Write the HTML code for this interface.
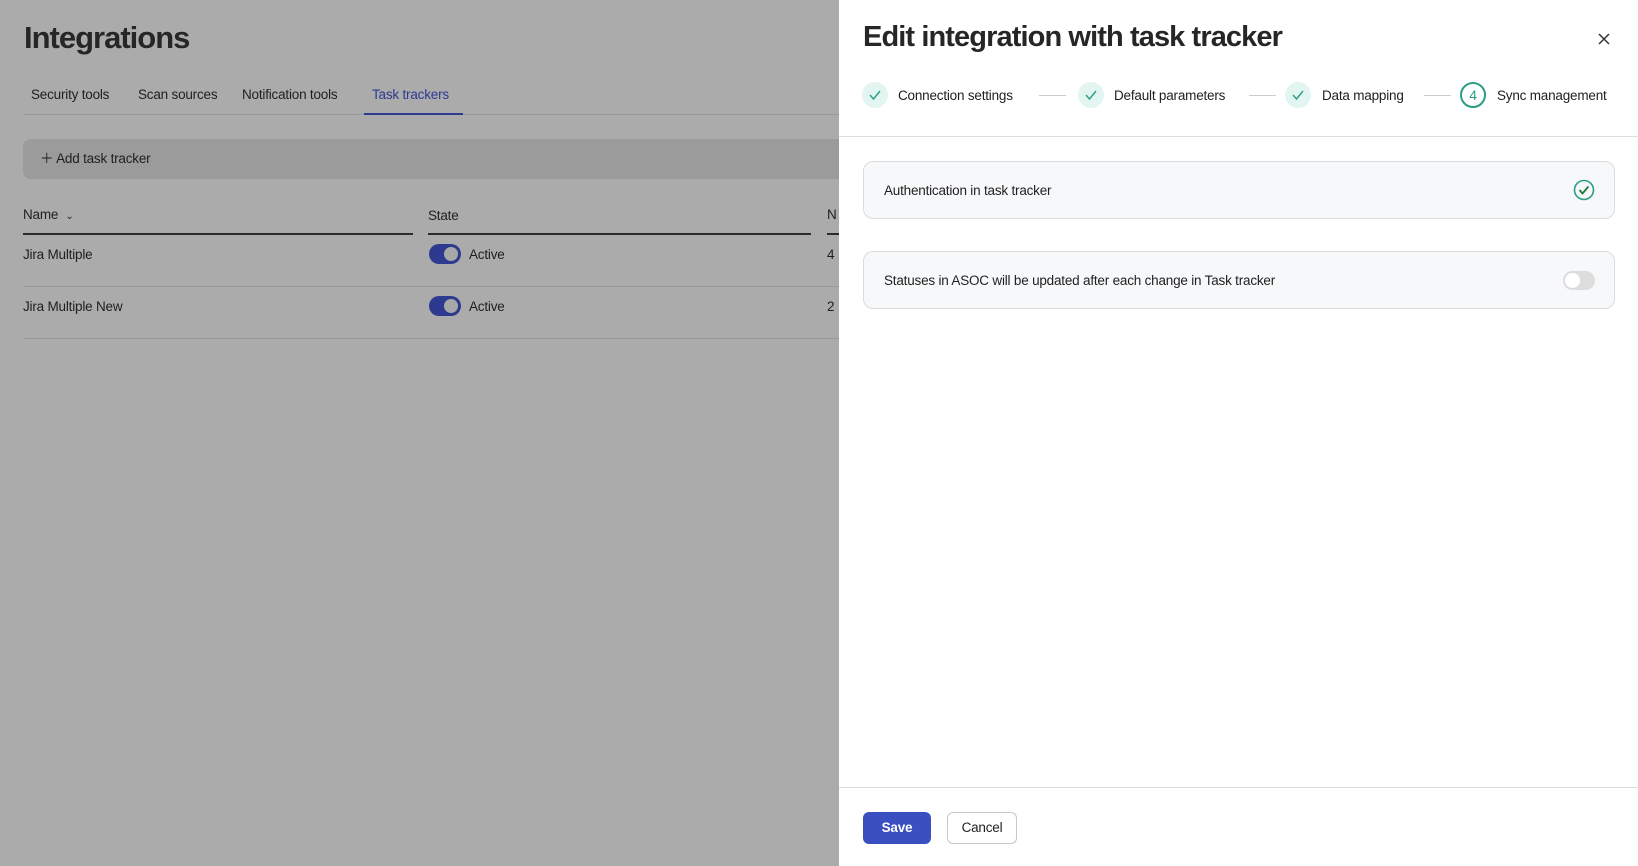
<!DOCTYPE html>
<html><head><meta charset="utf-8"><style>
*{box-sizing:border-box;margin:0;padding:0}
body{width:1638px;height:866px;overflow:hidden;background:#ababab;font-family:"Liberation Sans",sans-serif;color:#1f1f1f;position:relative;font-size:13.5px;letter-spacing:-0.2px}
.a{position:absolute;white-space:nowrap}
.ln{position:absolute;height:1px}
.tog{position:absolute;width:32px;height:20px;border-radius:10px;background:#2c3a8f}
.tog::after{content:"";position:absolute;right:3px;top:3px;width:14px;height:14px;border-radius:50%;background:#a8a8a8}
.step{position:absolute;width:26px;height:26px;border-radius:50%;background:#e3f5f1;top:82px}
.dash{position:absolute;top:95px;height:1px;width:27px;background:#ccc}
</style></head><body>
<div class="a" style="left:24px;top:20px;font-size:31px;letter-spacing:-1px;color:#262626;font-weight:bold">Integrations</div>
<div class="a" style="left:31px;top:87px">Security tools</div>
<div class="a" style="left:138px;top:87px">Scan sources</div>
<div class="a" style="left:242px;top:87px">Notification tools</div>
<div class="a" style="left:372px;top:87px;color:#2c3a8f">Task trackers</div>
<div class="ln" style="left:23px;top:114px;width:820px;background:#999"></div>
<div class="a" style="left:364px;top:113px;width:99px;height:2px;background:#2c3a8f"></div>
<div class="a" style="left:23px;top:139px;width:830px;height:40px;background:#9b9b9b;border-radius:8px"></div>
<div class="a" style="left:40px;top:147px">＋ Add task tracker</div>
<div class="a" style="left:23px;top:207px">Name&nbsp; <span style="font-size:10px">⌄</span></div>
<div class="a" style="left:428px;top:208px">State</div>
<div class="a" style="left:827px;top:207px">N</div>
<div class="a" style="left:23px;top:233px;width:390px;height:2px;background:#2a2a2a"></div>
<div class="a" style="left:428px;top:233px;width:383px;height:2px;background:#2a2a2a"></div>
<div class="a" style="left:827px;top:233px;width:20px;height:2px;background:#2a2a2a"></div>
<div class="a" style="left:23px;top:247px">Jira Multiple</div>
<div class="tog" style="left:429px;top:244px"></div>
<div class="a" style="left:469px;top:247px">Active</div>
<div class="a" style="left:827px;top:247px">4</div>
<div class="ln" style="left:23px;top:286px;width:820px;background:#999"></div>
<div class="a" style="left:23px;top:299px">Jira Multiple New</div>
<div class="tog" style="left:429px;top:296px"></div>
<div class="a" style="left:469px;top:299px">Active</div>
<div class="a" style="left:827px;top:299px">2</div>
<div class="ln" style="left:23px;top:338px;width:820px;background:#999"></div>

<div class="a" style="left:839px;top:0;width:799px;height:866px;background:#fff"></div>
<div class="a" style="left:863px;top:21px;font-size:29px;letter-spacing:-0.9px;color:#262626;font-weight:bold">Edit integration with task tracker</div>
<svg class="a" style="left:1597px;top:32px" width="14" height="14"><path d="M2 2L12 12M12 2L2 12" stroke="#333" stroke-width="1.5"/></svg>
<div class="step" style="left:862px"></div><div class="step" style="left:1078px"></div><div class="step" style="left:1285px"></div>
<svg class="a" style="left:868px;top:89px" width="14" height="12"><path d="M2 6l3.5 4L12 2" fill="none" stroke="#2a9d82" stroke-width="1.4"/></svg>
<svg class="a" style="left:1084px;top:89px" width="14" height="12"><path d="M2 6l3.5 4L12 2" fill="none" stroke="#2a9d82" stroke-width="1.4"/></svg>
<svg class="a" style="left:1291px;top:89px" width="14" height="12"><path d="M2 6l3.5 4L12 2" fill="none" stroke="#2a9d82" stroke-width="1.4"/></svg>
<div class="a" style="left:1460px;top:82px;width:26px;height:26px;border:2px solid #2a9d82;border-radius:50%;text-align:center;line-height:22px;color:#2a9d82;font-size:14px">4</div>
<div class="a" style="left:898px;top:88px">Connection settings</div>
<div class="dash" style="left:1039px"></div>
<div class="a" style="left:1114px;top:88px">Default parameters</div>
<div class="dash" style="left:1249px"></div>
<div class="a" style="left:1322px;top:88px">Data mapping</div>
<div class="dash" style="left:1424px"></div>
<div class="a" style="left:1497px;top:88px">Sync management</div>
<div class="ln" style="left:839px;top:136px;width:799px;background:#ddd"></div>
<div class="a" style="left:863px;top:161px;width:752px;height:58px;background:#f7f8fa;border:1px solid #dcdcdc;border-radius:10px"></div>
<div class="a" style="left:884px;top:183px">Authentication in task tracker</div>
<svg class="a" style="left:1573px;top:179px" width="22" height="22"><circle cx="11" cy="11" r="9.5" fill="none" stroke="#2a9d82" stroke-width="1.6"/><path d="M6.5 11l3 3.5L15.5 7.5" fill="none" stroke="#1a7a3a" stroke-width="1.8"/></svg>
<div class="a" style="left:863px;top:251px;width:752px;height:58px;background:#f7f8fa;border:1px solid #dcdcdc;border-radius:10px"></div>
<div class="a" style="left:884px;top:273px">Statuses in ASOC will be updated after each change in Task tracker</div>
<div class="a" style="left:1563px;top:271px;width:32px;height:19px;border-radius:10px;background:#ddd"><div style="position:absolute;left:2px;top:2px;width:15px;height:15px;border-radius:50%;background:#fff"></div></div>
<div class="ln" style="left:839px;top:787px;width:799px;background:#ddd"></div>
<div class="a" style="left:863px;top:812px;width:68px;height:32px;background:#3a4fc0;border-radius:6px;color:#fff;text-align:center;line-height:32px;font-weight:bold;font-size:13.5px">Save</div>
<div class="a" style="left:947px;top:812px;width:70px;height:32px;border:1px solid #c8c8c8;border-radius:6px;text-align:center;line-height:30px;font-size:13.5px">Cancel</div>
</body></html>
